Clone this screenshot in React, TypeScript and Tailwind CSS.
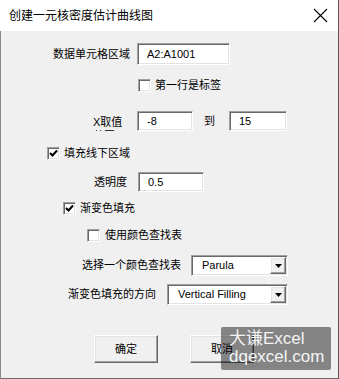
import React from "react";

const sunken = "bg-white border border-t-[#a0a0a0] border-l-[#a0a0a0] border-b-white border-r-white shadow-[inset_1px_1px_0_#696969,inset_-1px_-1px_0_#e3e3e3]";
const raised = "bg-[#f0f0f0] border border-t-white border-l-white border-b-[#696969] border-r-[#696969] shadow-[inset_-1px_-1px_0_#a0a0a0,inset_1px_1px_0_#e3e3e3]";

function Check({ checked }: { checked?: boolean }) {
  return (
    <div className={`w-[13px] h-[13px] shrink-0 flex items-center justify-center ${sunken}`}>
      {checked && (
        <svg width="9" height="9" viewBox="0 0 9 9">
          <path d="M1 4 L3.5 6.5 L8 1.5" fill="none" stroke="#000" strokeWidth="2" />
        </svg>
      )}
    </div>
  );
}

function TextBox({ value, className }: { value: string; className: string }) {
  return (
    <div className={`flex items-center pl-[9px] ${sunken} ${className}`}>
      <span>{value}</span>
    </div>
  );
}

function Select({ value, className }: { value: string; className: string }) {
  return (
    <div className={`flex items-center justify-between pl-[10px] pr-[1px] ${sunken} ${className}`}>
      <span>{value}</span>
      <div className={`w-[16px] h-[17px] flex items-center justify-center ${raised}`}>
        <svg width="7" height="4" viewBox="0 0 7 4">
          <path d="M0 0 H7 L3.5 4 Z" fill="#000" />
        </svg>
      </div>
    </div>
  );
}

function Button({ label }: { label: string }) {
  return (
    <div className={`w-[64px] h-[28px] flex items-center justify-center ${raised}`}>
      {label}
    </div>
  );
}

export default function App() {
  return (
    <div
      className="w-[339px] h-[379px] bg-white flex flex-col text-[11px] text-black border-r border-r-[#5a5a5a] overflow-hidden"
      style={{ fontFamily: '"Liberation Sans", "Noto Sans CJK SC", sans-serif' }}
    >
      {/* title bar */}
      <div className="h-[31px] shrink-0 flex items-center justify-between pl-[9px] pr-[10px]">
        <span className="text-[12px]">创建一元核密度估计曲线图</span>
        <svg width="15" height="15" viewBox="0 0 15 15">
          <path d="M1 1 L14 14 M14 1 L1 14" stroke="#000" strokeWidth="1.1" />
        </svg>
      </div>

      <div className="relative flex-1 bg-[#f0f0f0] border-l border-l-[#8a8a8a] border-b border-b-[#6b6b6b] flex flex-col">
        {/* data range */}
        <div className="mt-[12px] h-[22px] flex items-center pl-[52px]">
          <span className="w-[77px]">数据单元格区域</span>
          <TextBox value="A2:A1001" className="ml-[7px] w-[93px] h-[22px]" />
        </div>

        <div className="mt-[14px] h-[13px] flex items-center pl-[137px]">
          <Check />
          <span className="ml-[4px]">第一行是标签</span>
        </div>

        {/* x range */}
        <div className="mt-[19px] h-[20px] flex items-center pl-[92px]">
          <span className="w-[38px] h-[16px] mt-[4px] leading-[14px] overflow-hidden">X取值范围</span>
          <TextBox value="-8" className="ml-[6px] w-[56px] h-[20px]" />
          <span className="ml-[11px]">到</span>
          <TextBox value="15" className="ml-[14px] w-[58px] h-[20px]" />
        </div>

        <div className="mt-[16px] h-[13px] flex items-center pl-[46px]">
          <Check checked />
          <span className="ml-[4px]">填充线下区域</span>
        </div>

        <div className="mt-[12px] h-[20px] flex items-center pl-[93px]">
          <span className="w-[44px]">透明度</span>
          <TextBox value="0.5" className="w-[66px] h-[20px]" />
        </div>

        <div className="mt-[10px] h-[13px] flex items-center pl-[62px]">
          <Check checked />
          <span className="ml-[4px]">渐变色填充</span>
        </div>

        <div className="mt-[14px] h-[13px] flex items-center pl-[86px]">
          <Check />
          <span className="ml-[5px]">使用颜色查找表</span>
        </div>

        <div className="mt-[13px] h-[21px] flex items-center pl-[81px]">
          <span className="w-[109px]">选择一个颜色查找表</span>
          <Select value="Parula" className="w-[97px] h-[21px]" />
        </div>

        <div className="mt-[8px] h-[21px] flex items-center pl-[67px]">
          <span className="w-[99px]">渐变色填充的方向</span>
          <Select value="Vertical Filling" className="w-[121px] h-[21px]" />
        </div>

        <div className="mt-[30px] flex items-center pl-[93px] gap-[32px]">
          <Button label="确定" />
          <Button label="取消" />
        </div>

        {/* watermark */}
        <div className="absolute left-[220px] top-[296px] w-[110px] h-[43px] rounded-[2px] bg-black/45 text-[#f4f4f4] text-[17px] leading-[18px] pl-[8px] pt-[3px]">
          <div>大谦Excel</div>
          <div>dqexcel.com</div>
        </div>
      </div>
    </div>
  );
}
